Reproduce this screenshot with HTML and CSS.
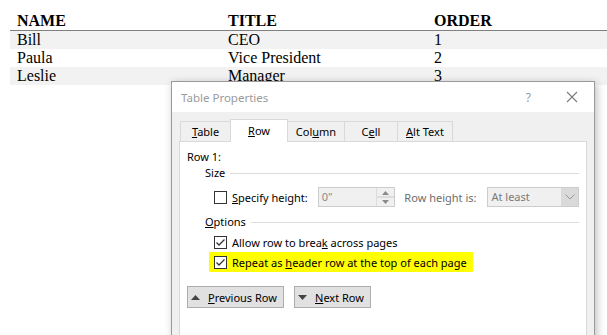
FILE: index.html
```html
<!DOCTYPE html>
<html lang="en">
<head>
    <meta charset="UTF-8">
    <meta name="viewport" content="width=device-width, initial-scale=1.0">
    <title>Table Properties</title>
    <link rel="stylesheet" href="styles.css">
</head>
<body>

    <!-- Document table behind the dialog -->
    <table class="people">
        <thead>
            <tr>
                <th>NAME</th>
                <th>TITLE</th>
                <th>ORDER</th>
            </tr>
        </thead>
        <tbody>
            <tr><td>Bill</td><td>CEO</td><td>1</td></tr>
            <tr><td>Paula</td><td>Vice President</td><td>2</td></tr>
            <tr><td>Leslie</td><td>Manager</td><td>3</td></tr>
        </tbody>
    </table>

    <!-- Table Properties dialog -->
    <div class="dialog">
        <div class="titlebar">
            <span class="title">Table Properties</span>
            <span class="help">?</span>
            <svg class="close" width="12" height="12" viewBox="0 0 12 12">
                <path d="M1 1 L11 11 M11 1 L1 11" stroke="#7a7a7a" stroke-width="1.1" fill="none"/>
            </svg>
        </div>

        <div class="dialog-body">
            <div class="tabs">
                <div class="tab tab-table"><u>T</u>able</div>
                <div class="tab tab-row active"><u>R</u>ow</div>
                <div class="tab tab-column">Col<u>u</u>mn</div>
                <div class="tab tab-cell">C<u>e</u>ll</div>
                <div class="tab tab-alt"><u>A</u>lt Text</div>
            </div>

            <div class="panel">
                <div class="row-label">Row 1:</div>

                <div class="group-head">
                    <span>Size</span>
                    <span class="rule"></span>
                </div>

                <div class="size-line">
                    <div class="check">
                        <span class="box"></span>
                        <span class="check-text"><u>S</u>pecify height:</span>
                    </div>
                    <div class="spin">
                        <span class="spin-value">0"</span>
                        <span class="spin-btns">
                            <svg width="7" height="4" viewBox="0 0 7 4"><path d="M0 4 L3.5 0 L7 4 Z" fill="#8a8a8a"/></svg>
                            <svg width="7" height="4" viewBox="0 0 7 4"><path d="M0 0 L3.5 4 L7 0 Z" fill="#8a8a8a"/></svg>
                        </span>
                    </div>
                    <span class="muted">Row height is:</span>
                    <div class="select">
                        <span class="select-value">At least</span>
                        <span class="select-btn">
                            <svg width="10" height="6" viewBox="0 0 10 6"><path d="M0.5 0.5 L5 5 L9.5 0.5" stroke="#9a9a9a" stroke-width="1" fill="none"/></svg>
                        </span>
                    </div>
                </div>

                <div class="group-head options-head">
                    <span><u>O</u>ptions</span>
                    <span class="rule"></span>
                </div>

                <div class="check option">
                    <span class="box">
                        <svg width="11" height="11" viewBox="0 0 11 11"><path d="M1.5 5.5 L4 8 L9.5 2.5" stroke="#333" stroke-width="1.3" fill="none"/></svg>
                    </span>
                    <span class="check-text">Allow row to brea<u>k</u> across pages</span>
                </div>

                <div class="check option highlight">
                    <span class="box">
                        <svg width="11" height="11" viewBox="0 0 11 11"><path d="M1.5 5.5 L4 8 L9.5 2.5" stroke="#333" stroke-width="1.3" fill="none"/></svg>
                    </span>
                    <span class="check-text">Repeat as <u>h</u>eader row at the top of each page</span>
                </div>

                <div class="nav-buttons">
                    <button class="nav-btn prev">
                        <svg width="9" height="5" viewBox="0 0 9 5"><path d="M0 5 L4.5 0 L9 5 Z" fill="#444"/></svg>
                        <span><u>P</u>revious Row</span>
                    </button>
                    <button class="nav-btn next">
                        <svg width="9" height="5" viewBox="0 0 9 5"><path d="M0 0 L4.5 5 L9 0 Z" fill="#444"/></svg>
                        <span><u>N</u>ext Row</span>
                    </button>
                </div>
            </div>
        </div>
    </div>

</body>
</html>
```

FILE: styles.css
```css
/* General styling */
body {
    margin: 0;
    padding: 12px 0 0 10px;
    background: #ffffff;
    font-family: "Liberation Serif", "Times New Roman", serif;
    overflow: hidden;
}

/* Document table */
.people {
    width: 597px;
    border-collapse: collapse;
    font-size: 16px;
    color: #000;
}

.people th,
.people td {
    padding: 0 0 0 7px;
    text-align: left;
    height: 18px;
    line-height: 18px;
}

.people th {
    font-weight: bold;
    border-bottom: 1px solid #808080;
}

.people th:nth-child(1) {
    width: 204px;
}

.people th:nth-child(2) {
    width: 199px;
}

.people tbody tr:nth-child(odd) {
    background-color: #f2f2f2;
}

/* Dialog window */
.dialog {
    position: absolute;
    left: 171px;
    top: 81px;
    width: 422px;
    height: 300px;
    border: 1px solid #9a9a9a;
    background: #f0f0f0;
    box-shadow: 2px 2px 8px rgba(0, 0, 0, 0.25);
    font-family: "Noto Sans", "Open Sans", sans-serif;
    font-size: 11px;
    color: #000;
    white-space: nowrap;
}

.titlebar {
    height: 30px;
    background: #ffffff;
    display: flex;
    align-items: center;
    padding: 0 0 0 9px;
}

.title {
    color: #9a9a9a;
    font-size: 11.5px;
    flex: 1;
}

.help {
    color: #9a9a9a;
    font-size: 12px;
    margin-right: 35px;
}

.close {
    margin-right: 16px;
}

.dialog-body {
    padding: 7px 7px 0 7px;
}

/* Tabs */
.tabs {
    display: flex;
    align-items: flex-end;
    padding-left: 1px;
    height: 22px;
    position: relative;
    z-index: 1;
}

.tab {
    box-sizing: border-box;
    height: 20px;
    line-height: 19px;
    border: 1px solid #d9d9d9;
    border-bottom: none;
    margin-right: -1px;
    text-align: center;
    background: #f0f0f0;
}

.tab.active {
    height: 23px;
    line-height: 21px;
    background: #ffffff;
    margin-bottom: -1px;
    position: relative;
    z-index: 2;
}

.tab-table { width: 51px; }
.tab-row { width: 58px; }
.tab-column { width: 58px; }
.tab-cell { width: 54px; }
.tab-alt { width: 56px; }

/* Tab panel */
.panel {
    box-sizing: border-box;
    width: 408px;
    height: 240px;
    background: #ffffff;
    border: 1px solid #d9d9d9;
    padding: 7px 7px 0 7px;
}

.row-label {
    height: 16px;
    line-height: 16px;
}

.group-head {
    display: flex;
    align-items: center;
    height: 16px;
    line-height: 16px;
    margin-left: 18px;
}

.rule {
    flex: 1;
    height: 1px;
    background: #dcdcdc;
    margin-left: 5px;
}

.options-head {
    margin-top: 7px;
}

/* Checkboxes */
.check {
    display: flex;
    align-items: center;
}

.box {
    box-sizing: border-box;
    width: 13px;
    height: 13px;
    border: 1px solid #333;
    background: #ffffff;
    display: flex;
    align-items: center;
    justify-content: center;
}

.check-text {
    margin-left: 5px;
}

.option {
    margin-left: 27px;
    height: 19px;
}

.options-head + .option {
    margin-top: 3px;
}

.highlight {
    background: #ffff00;
    width: fit-content;
    height: 20px;
    margin-left: 22px;
    padding: 0 6px 0 5px;
    border-radius: 1px;
}

/* Size line */
.size-line {
    display: flex;
    align-items: center;
    height: 20px;
    margin: 6px 0 0 27px;
}

.spin {
    box-sizing: border-box;
    display: flex;
    width: 78px;
    height: 20px;
    margin-left: 10px;
    border: 1px solid #cccccc;
    background: #f0f0f0;
}

.spin-value {
    flex: 1;
    color: #8a8a8a;
    line-height: 18px;
    padding-left: 3px;
}

.spin-btns {
    width: 17px;
    display: flex;
    flex-direction: column;
    align-items: center;
    justify-content: space-around;
    border-left: 1px solid #dcdcdc;
    background: linear-gradient(#f0f0f0 0 45%, #dcdcdc 45% 55%, #f0f0f0 55%);
}

.muted {
    color: #6d6d6d;
    margin-left: 9px;
}

.select {
    box-sizing: border-box;
    display: flex;
    width: 92px;
    height: 20px;
    margin-left: 11px;
    border: 1px solid #cccccc;
    background: #f0f0f0;
}

.select-value {
    flex: 1;
    color: #7a7a7a;
    line-height: 18px;
    padding-left: 3px;
}

.select-btn {
    width: 17px;
    display: flex;
    align-items: center;
    justify-content: center;
    background: #dadada;
}

/* Previous / Next buttons */
.nav-buttons {
    display: flex;
    gap: 10px;
    margin-top: 14px;
}

.nav-btn {
    box-sizing: border-box;
    display: flex;
    align-items: center;
    height: 22px;
    padding: 0 0 0 3px;
    border: 1px solid #adadad;
    background: #e1e1e1;
    font-family: "Noto Sans", "Open Sans", sans-serif;
    font-size: 11px;
    color: #000;
    white-space: nowrap;
}

.nav-btn span {
    margin-left: 8px;
}

.prev {
    width: 97px;
}

.next {
    width: 77px;
}
```
